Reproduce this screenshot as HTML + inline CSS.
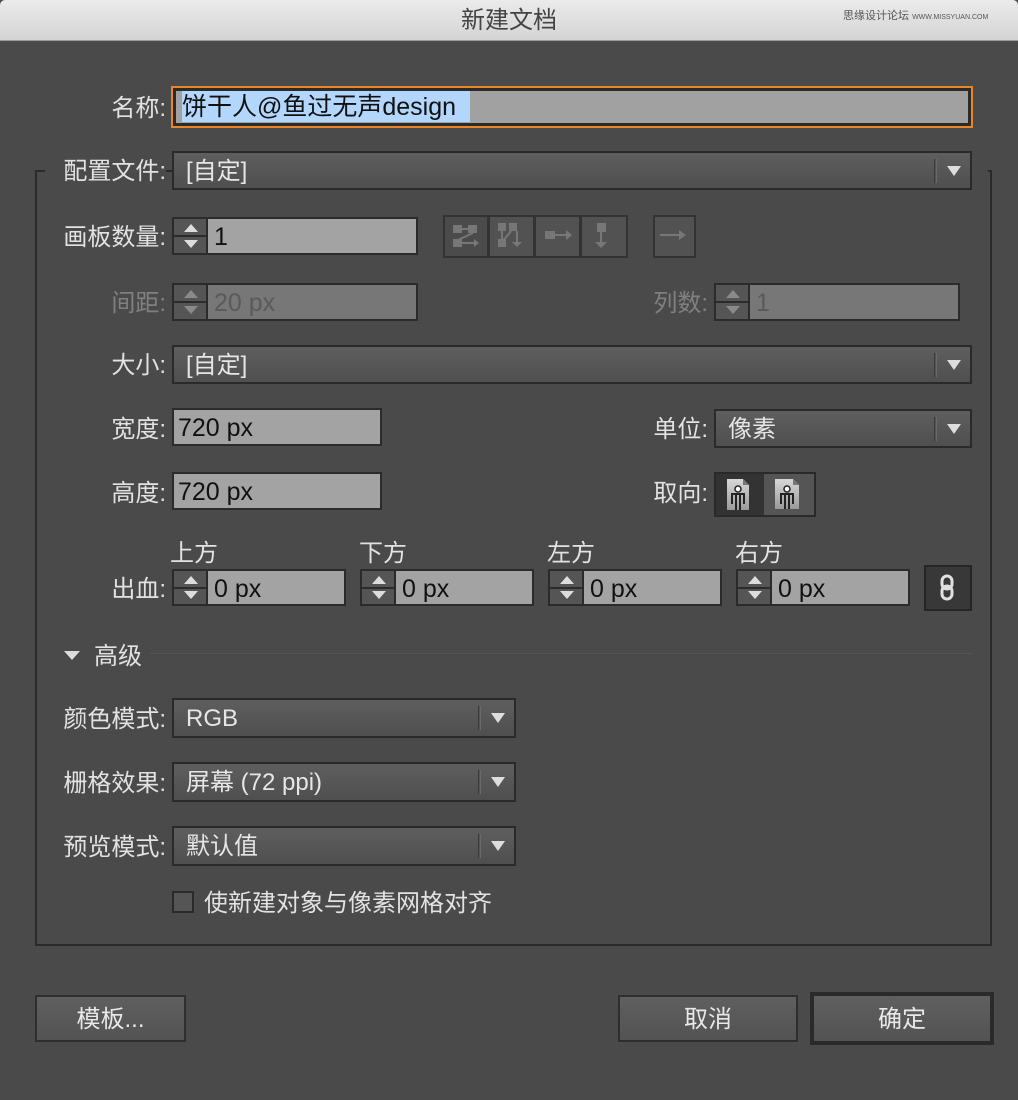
<!DOCTYPE html>
<html><head><meta charset="utf-8"><style>
*{box-sizing:border-box;margin:0;padding:0}
body{width:1018px;height:1100px;background:#4a4a4a;position:relative;overflow:hidden;font-family:"Liberation Sans","Noto Sans CJK SC",sans-serif;color:#e0e0e0}
.a{position:absolute}
.title{left:0;top:0;width:1018px;height:41px;background:linear-gradient(#ebebeb,#d4d4d4);border-bottom:1px solid #9a9a9a;border-top-left-radius:5px;border-top-right-radius:5px}
.lbl{position:absolute;font-size:24px;line-height:35px;color:#e2e2e2;text-align:right;white-space:nowrap}
.dis{color:#808080}
.dd{position:absolute;border:2px solid #2a2a2a;background:linear-gradient(#5e5e5e,#4f4f4f);font-size:24px;line-height:37px;padding-left:12px;color:#e6e6e6}
.dd .sep{position:absolute;top:6px;width:3px;height:24px;border-left:1px solid #3a3a3a;border-right:1px solid #6a6a6a;background:#555}
.dd .arr{position:absolute;top:13px;width:0;height:0;border-left:7px solid transparent;border-right:7px solid transparent;border-top:10px solid #ddd}
.fld{position:absolute;border:2px solid #2b2b2b;background:#a3a3a3;font-size:25px;line-height:36px;padding-left:4px;color:#111}
.sp{position:absolute;border:2px solid #2b2b2b;background:#a3a3a3;font-size:25px;line-height:36px;color:#111}
.sp .btn{position:absolute;left:0;top:0;width:34px;height:100%;border-right:2px solid #2b2b2b;background:#555}
.sp .btn:after{content:"";position:absolute;left:0;right:0;top:50%;border-top:2px solid #2b2b2b;margin-top:-1px}
.up{position:absolute;left:10px;top:5px;border-left:7px solid transparent;border-right:7px solid transparent;border-bottom:8px solid #ddd}
.dn{position:absolute;left:10px;bottom:5px;border-left:7px solid transparent;border-right:7px solid transparent;border-top:8px solid #ddd}
.sp .t{position:absolute;left:40px;top:0}
.sp.dis{background:#777;color:#5a5a5a}
.sp.dis .up{border-bottom-color:#8a8a8a}.sp.dis .dn{border-top-color:#8a8a8a}
.ib{position:absolute;border:2px solid #333;background:#525252}
.pb{position:absolute;border:2px solid #2e2e2e;background:linear-gradient(#5f5f5f,#535353);font-size:24px;color:#e8e8e8;text-align:center}
</style></head><body>
<div class="a title"></div>
<div class="a" style="left:0;top:5px;width:1018px;text-align:center;font-size:24px;color:#444;line-height:32px">新建文档</div>
<div class="a" style="left:843px;top:9px;font-size:11px;color:#555;line-height:14px;white-space:nowrap">思缘设计论坛 <span style="font-size:7px">WWW.MISSYUAN.COM</span></div>

<div class="lbl" style="left:60px;width:106px;top:91px">名称:</div>
<div class="a" style="left:171px;top:86px;width:802px;height:42px;border:2px solid #e8862a"></div>
<div class="a" style="left:173px;top:88px;width:798px;height:38px;border:3px solid #2b2b2b;background:#a1a1a1"></div>
<div class="a" style="left:182px;top:91px;width:288px;height:31px;background:#b2d6fc"></div>
<div class="a" style="left:182px;top:91px;font-size:25px;line-height:33px;color:#111">饼干人@鱼过无声design</div>

<div class="a" style="left:35px;top:170px;width:957px;height:776px;border:2px solid #2a2a2a"></div>
<div class="a" style="left:45px;top:160px;width:121px;height:22px;background:#4a4a4a"></div>
<div class="a" style="left:972px;top:160px;width:16px;height:22px;background:#4a4a4a"></div>

<div class="lbl" style="left:40px;width:126px;top:154px">配置文件:</div>
<div class="dd" style="left:172px;top:151px;width:800px;height:39px">[自定]<span class="sep" style="left:760px"></span><span class="arr" style="left:773px"></span></div>

<div class="lbl" style="left:40px;width:126px;top:220px">画板数量:</div>
<div class="sp" style="left:172px;top:217px;width:246px;height:38px"><div class="btn"><span class="up"></span><span class="dn"></span></div><span class="t">1</span></div>

<div class="ib" style="left:443px;top:215px;width:46px;height:43px;background:#4b4b4b"></div>
<div class="ib" style="left:488px;top:215px;width:47px;height:43px"></div>
<div class="ib" style="left:534px;top:215px;width:47px;height:43px"></div>
<div class="ib" style="left:580px;top:215px;width:48px;height:43px"></div>
<div class="ib" style="left:653px;top:215px;width:43px;height:43px"></div>
<svg class="a" style="left:443px;top:215px" width="260" height="43" fill="#777" stroke="#777" stroke-width="2">
<rect x="10" y="10" width="9" height="8" stroke="none"/><rect x="25" y="10" width="9" height="8" stroke="none"/><rect x="10" y="24" width="9" height="8" stroke="none"/>
<path d="M19 14h6M30 18L15 25M19 28h14" fill="none"/><path d="M31 24l5 4-5 4z" stroke="none"/>
<rect x="55" y="8" width="8" height="8" stroke="none"/><rect x="66" y="8" width="8" height="8" stroke="none"/><rect x="55" y="24" width="8" height="8" stroke="none"/>
<path d="M59 16v8M68 16L60 26M74 16v12" fill="none"/><path d="M69 27h10l-5 5z" stroke="none"/>
<rect x="102" y="16" width="10" height="8" stroke="none"/><path d="M112 20h12" fill="none"/><path d="M123 15l6 5-6 5z" stroke="none"/>
<rect x="154" y="8" width="9" height="9" stroke="none"/><path d="M158 17v12" fill="none"/><path d="M152 27h12l-6 6z" stroke="none"/>
<path d="M217 20h22" fill="none"/><path d="M236 15l7 5-7 5z" stroke="none"/>
</svg>

<div class="lbl dis" style="left:60px;width:106px;top:286px">间距:</div>
<div class="sp dis" style="left:172px;top:283px;width:246px;height:38px"><div class="btn"><span class="up"></span><span class="dn"></span></div><span class="t">20 px</span></div>
<div class="lbl dis" style="left:600px;width:108px;top:286px">列数:</div>
<div class="sp dis" style="left:714px;top:283px;width:246px;height:38px"><div class="btn"><span class="up"></span><span class="dn"></span></div><span class="t">1</span></div>

<div class="lbl" style="left:60px;width:106px;top:348px">大小:</div>
<div class="dd" style="left:172px;top:345px;width:800px;height:39px">[自定]<span class="sep" style="left:760px"></span><span class="arr" style="left:773px"></span></div>

<div class="lbl" style="left:60px;width:106px;top:412px">宽度:</div>
<div class="fld" style="left:172px;top:408px;width:210px;height:38px">720 px</div>
<div class="lbl" style="left:600px;width:108px;top:412px">单位:</div>
<div class="dd" style="left:714px;top:409px;width:258px;height:39px">像素<span class="sep" style="left:218px"></span><span class="arr" style="left:231px"></span></div>

<div class="lbl" style="left:60px;width:106px;top:476px">高度:</div>
<div class="fld" style="left:172px;top:472px;width:210px;height:38px">720 px</div>
<div class="lbl" style="left:600px;width:108px;top:476px">取向:</div>
<div class="a" style="left:714px;top:472px;width:102px;height:45px;border:2px solid #2a2a2a;background:#555"></div>
<div class="a" style="left:716px;top:474px;width:48px;height:41px;background:#333"></div>
<svg class="a" style="left:716px;top:474px" width="98" height="41">
<defs><linearGradient id="g" x1="0" y1="0" x2="0" y2="1"><stop offset="0" stop-color="#d8d8d8"/><stop offset="1" stop-color="#9a9a9a"/></linearGradient></defs>
<path d="M11 5h16l6 6v25H11z" fill="url(#g)"/><path d="M27 5v6h6" fill="#777"/>
<circle cx="22" cy="15" r="3" fill="#fff" stroke="#222" stroke-width="1.5"/><path d="M16 30v-10h12v10M20 20v16M24 20v16" fill="none" stroke="#222" stroke-width="2"/>
<path d="M59 5h18l6 6v24H59z" fill="url(#g)"/><path d="M77 5v6h6" fill="#777"/>
<circle cx="71" cy="15" r="3" fill="#fff" stroke="#222" stroke-width="1.5"/><path d="M65 30v-10h12v10M69 20v15M73 20v15" fill="none" stroke="#222" stroke-width="2"/>
</svg>

<div class="lbl" style="left:170px;top:536px">上方</div>
<div class="lbl" style="left:359px;top:536px">下方</div>
<div class="lbl" style="left:547px;top:536px">左方</div>
<div class="lbl" style="left:735px;top:536px">右方</div>
<div class="lbl" style="left:60px;width:106px;top:572px">出血:</div>
<div class="sp" style="left:172px;top:569px;width:174px;height:37px"><div class="btn"><span class="up"></span><span class="dn"></span></div><span class="t">0 px</span></div>
<div class="sp" style="left:360px;top:569px;width:174px;height:37px"><div class="btn"><span class="up"></span><span class="dn"></span></div><span class="t">0 px</span></div>
<div class="sp" style="left:548px;top:569px;width:174px;height:37px"><div class="btn"><span class="up"></span><span class="dn"></span></div><span class="t">0 px</span></div>
<div class="sp" style="left:736px;top:569px;width:174px;height:37px"><div class="btn"><span class="up"></span><span class="dn"></span></div><span class="t">0 px</span></div>
<div class="a" style="left:924px;top:565px;width:48px;height:46px;border:2px solid #262626;background:#383838"></div>
<svg class="a" style="left:924px;top:565px" width="48" height="46" fill="none" stroke="#e0e0e0" stroke-width="3"><rect x="18" y="11" width="10" height="13" rx="5"/><rect x="18" y="21" width="10" height="13" rx="5"/></svg>

<div class="a" style="left:64px;top:651px;border-left:8px solid transparent;border-right:8px solid transparent;border-top:9px solid #ddd"></div>
<div class="lbl" style="left:94px;top:639px">高级</div>
<div class="a" style="left:150px;top:653px;width:823px;height:1px;background:#333;border-bottom:1px solid #555"></div>

<div class="lbl" style="left:40px;width:126px;top:702px">颜色模式:</div>
<div class="dd" style="left:172px;top:698px;width:344px;height:40px">RGB<span class="sep" style="left:304px"></span><span class="arr" style="left:317px"></span></div>
<div class="lbl" style="left:40px;width:126px;top:766px">栅格效果:</div>
<div class="dd" style="left:172px;top:762px;width:344px;height:40px">屏幕 (72 ppi)<span class="sep" style="left:304px"></span><span class="arr" style="left:317px"></span></div>
<div class="lbl" style="left:40px;width:126px;top:830px">预览模式:</div>
<div class="dd" style="left:172px;top:826px;width:344px;height:40px">默认值<span class="sep" style="left:304px"></span><span class="arr" style="left:317px"></span></div>

<div class="a" style="left:172px;top:891px;width:22px;height:22px;border:2px solid #2a2a2a;background:#555"></div>
<div class="lbl" style="left:204px;top:886px">使新建对象与像素网格对齐</div>

<div class="pb" style="left:35px;top:995px;width:151px;height:47px;line-height:45px">模板...</div>
<div class="pb" style="left:618px;top:995px;width:180px;height:47px;line-height:45px">取消</div>
<div class="pb" style="left:810px;top:992px;width:184px;height:53px;line-height:47px;border:4px solid #2a2a2a">确定</div>
</body></html>
